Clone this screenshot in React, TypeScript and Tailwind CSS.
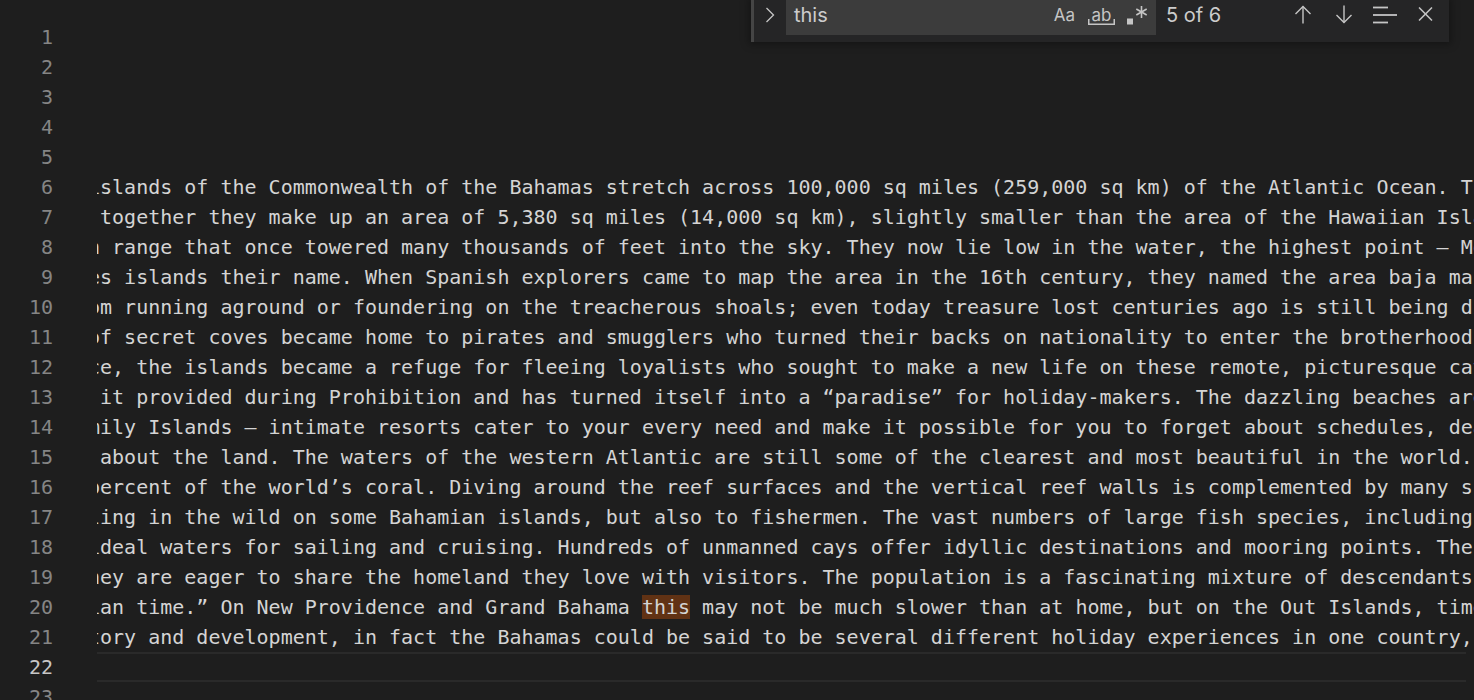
import React from "react";

const lines: string[] = [
  "",
  "",
  "",
  "",
  "",
  "islands of the Commonwealth of the Bahamas stretch across 100,000 sq miles (259,000 sq km) of the Atlantic Ocean. The",
  " together they make up an area of 5,380 sq miles (14,000 sq km), slightly smaller than the area of the Hawaiian Islands.",
  "n range that once towered many thousands of feet into the sky. They now lie low in the water, the highest point – Mount",
  "es islands their name. When Spanish explorers came to map the area in the 16th century, they named the area baja mar",
  "om running aground or foundering on the treacherous shoals; even today treasure lost centuries ago is still being discovered",
  "of secret coves became home to pirates and smugglers who turned their backs on nationality to enter the brotherhood of",
  "ce, the islands became a refuge for fleeing loyalists who sought to make a new life on these remote, picturesque cays",
  " it provided during Prohibition and has turned itself into a “paradise” for holiday-makers. The dazzling beaches are",
  "mily Islands – intimate resorts cater to your every need and make it possible for you to forget about schedules, deadlines",
  " about the land. The waters of the western Atlantic are still some of the clearest and most beautiful in the world.  ",
  "percent of the world’s coral. Diving around the reef surfaces and the vertical reef walls is complemented by many species",
  "ling in the wild on some Bahamian islands, but also to fishermen. The vast numbers of large fish species, including",
  "ideal waters for sailing and cruising. Hundreds of unmanned cays offer idyllic destinations and mooring points. The",
  "hey are eager to share the homeland they love with visitors. The population is a fascinating mixture of descendants of",
  "ian time.” On New Providence and Grand Bahama this may not be much slower than at home, but on the Out Islands, time",
  "tory and development, in fact the Bahamas could be said to be several different holiday experiences in one country, and",
  "",
  "",
];

function CodeLine({ text, idx }: { text: string; idx: number }) {
  if (idx === 19) {
    const i = text.indexOf("this");
    return (
      <span className="ml-[-9px] whitespace-pre">
        {text.slice(0, i)}
        <span className="bg-[#613214]">this</span>
        {text.slice(i + 4)}
      </span>
    );
  }
  return <span className="ml-[-9px] whitespace-pre">{text}</span>;
}

export default function App() {
  return (
    <div className="relative h-[700px] w-[1474px] overflow-hidden bg-[#1e1e1e] font-['DejaVu_Sans_Mono',monospace] text-[20px]">
      <div className="flex pt-[22px]">
        <div className="w-[97px] shrink-0 pr-[44px] text-right">
          {lines.map((_, i) => (
            <div
              key={i}
              className={`h-[30px] leading-[30px] ${i === 21 ? "text-[#c6c6c6]" : "text-[#858585]"}`}
            >
              {i + 1}
            </div>
          ))}
        </div>
        <div className="min-w-0 flex-1 overflow-hidden text-[#d4d4d4]">
          {lines.map((t, i) => (
            <div
              key={i}
              className={
                i === 21
                  ? "mr-[8px] flex h-[30px] border-y-2 border-[#2a2a2a] leading-[26px]"
                  : "flex h-[30px] leading-[30px]"
              }
            >
              <CodeLine text={t} idx={i} />
            </div>
          ))}
        </div>
      </div>

      {/* Find widget */}
      <div className="absolute left-[751px] top-0 flex h-[42px] w-[698px] items-start border-l-[3px] border-[#454545] bg-[#252526] font-['Inter',sans-serif] text-[#cccccc] shadow-[0_0_8px_2px_rgba(0,0,0,0.36)]">
        <div className="flex h-[35px] w-[32px] items-center justify-center pb-[5px]">
          <svg width="10" height="16" viewBox="0 0 10 16" fill="none">
            <path d="M1.5 1 L8.5 8 L1.5 15" stroke="#c5c5c5" strokeWidth="1.3" />
          </svg>
        </div>
        <div className="flex h-[35px] w-[370px] items-center bg-[#3c3c3c] pb-[5px]">
          <span className="flex-1 pl-[8px] text-[20px] leading-[24px] text-[#cccccc]">this</span>
          <div className="flex w-[37px] items-center justify-center text-[17px] leading-[20px] text-[#c5c5c5]">
            Aa
          </div>
          <div className="relative flex h-[20px] w-[37px] items-center justify-center">
            <span className="text-[17px] leading-[20px] text-[#c5c5c5]">ab</span>
            <svg
              className="absolute left-[5px] top-[13px]"
              width="27"
              height="8"
              viewBox="0 0 27 8"
              fill="none"
            >
              <path d="M0.75 1 V6.25 H26.25 V1" stroke="#c5c5c5" strokeWidth="1.5" />
            </svg>
          </div>
          <div className="flex w-[36px] items-center justify-center">
            <svg width="24" height="22" viewBox="0 0 24 22" fill="none">
              <rect x="1" y="14.5" width="6" height="6" fill="#c5c5c5" />
              <g stroke="#c5c5c5" strokeWidth="1.6">
                <path d="M15.5 2 V14" />
                <path d="M10.3 5 L20.7 11" />
                <path d="M10.3 11 L20.7 5" />
              </g>
            </svg>
          </div>
        </div>
        <div className="flex h-[35px] w-[126px] items-center pb-[5px] pl-[10px] text-[20px] leading-[24px] text-[#cccccc]">
          5 of 6
        </div>
        <div className="flex h-[35px] w-[41px] items-center justify-center pb-[7px]">
          <svg width="18" height="19" viewBox="0 0 18 19" fill="none">
            <g stroke="#c5c5c5" strokeWidth="1.4">
              <path d="M9 1.5 V18.5" />
              <path d="M1.5 9 L9 1.5 L16.5 9" />
            </g>
          </svg>
        </div>
        <div className="flex h-[35px] w-[41px] items-center justify-center pb-[7px]">
          <svg width="18" height="19" viewBox="0 0 18 19" fill="none">
            <g stroke="#c5c5c5" strokeWidth="1.4">
              <path d="M9 0.5 V17.5" />
              <path d="M1.5 10 L9 17.5 L16.5 10" />
            </g>
          </svg>
        </div>
        <div className="flex h-[35px] w-[41px] items-center justify-center pb-[6px]">
          <svg width="24" height="18" viewBox="0 0 24 18" fill="none">
            <g stroke="#c5c5c5" strokeWidth="1.8">
              <path d="M0 1.5 H15" />
              <path d="M0 9 H24" />
              <path d="M0 16.5 H15" />
            </g>
          </svg>
        </div>
        <div className="flex h-[35px] w-[41px] items-center justify-center pb-[8px]">
          <svg width="15" height="14" viewBox="0 0 15 14" fill="none">
            <g stroke="#c5c5c5" strokeWidth="1.5">
              <path d="M1 0.5 L14 13.5" />
              <path d="M14 0.5 L1 13.5" />
            </g>
          </svg>
        </div>
      </div>
    </div>
  );
}
